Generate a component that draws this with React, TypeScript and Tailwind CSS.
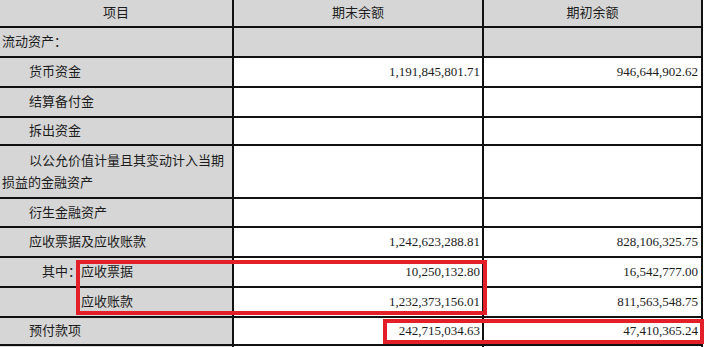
import React from "react";

const GRAY = "bg-[#d6d6d6]";

type Row = {
  h: string;
  label: React.ReactNode;
  labelClass?: string;
  a?: string;
  b?: string;
  grayAll?: boolean;
  header?: boolean;
};

const rows: Row[] = [
  { h: "h-[28px]", label: "项目", header: true, a: "期末余额", b: "期初余额", grayAll: true },
  { h: "h-[30px]", label: "流动资产：", labelClass: "pl-[2px]", grayAll: true },
  { h: "h-[30px]", label: "货币资金", labelClass: "pl-[29px]", a: "1,191,845,801.71", b: "946,644,902.62" },
  { h: "h-[30px]", label: "结算备付金", labelClass: "pl-[29px]" },
  { h: "h-[28px]", label: "拆出资金", labelClass: "pl-[29px]" },
  {
    h: "h-[53px]",
    label: (
      <span className="block leading-[22px] indent-[27px]">
        以公允价值计量且其变动计入当期
        <br />
        损益的金融资产
      </span>
    ),
    labelClass: "pl-[2px]",
  },
  { h: "h-[29px]", label: "衍生金融资产", labelClass: "pl-[29px]" },
  { h: "h-[30px]", label: "应收票据及应收账款", labelClass: "pl-[29px]", a: "1,242,623,288.81", b: "828,106,325.75" },
  { h: "h-[30px]", label: "其中：应收票据", labelClass: "pl-[42px]", a: "10,250,132.80", b: "16,542,777.00" },
  { h: "h-[30px]", label: "应收账款", labelClass: "pl-[81px]", a: "1,232,373,156.01", b: "811,563,548.75" },
  { h: "h-[28px]", label: "预付款项", labelClass: "pl-[29px]", a: "242,715,034.63", b: "47,410,365.24" },
  { h: "h-[30px]", label: "" },
];

export default function App() {
  return (
    <div
      className="relative w-[704px] h-[347px] overflow-hidden bg-white text-[13px] text-[#1c1c1c]"
      style={{ fontFamily: "'Liberation Serif', 'Noto Sans CJK SC', serif" }}
    >
      {rows.map((r, i) => (
        <div key={i} className={`grid grid-cols-[234px_250px_219px] ${r.h}`}>
          <div
            className={`${GRAY} border-r-2 border-b-2 border-[#111] flex items-center ${
              r.header ? "justify-center" : ""
            } ${r.labelClass ?? ""} whitespace-nowrap`}
          >
            {r.label}
          </div>
          <div
            className={`${r.grayAll ? GRAY : "bg-white"} border-r-2 border-b-2 border-[#111] flex items-center ${
              r.header ? "justify-center" : "justify-end pr-[2px]"
            }`}
          >
            {r.a ?? ""}
          </div>
          <div
            className={`${r.grayAll ? GRAY : "bg-white"} border-r-2 border-b-2 border-[#111] flex items-center ${
              r.header ? "justify-center" : "justify-end pr-[3px]"
            }`}
          >
            {r.b ?? ""}
          </div>
        </div>
      ))}
      <div className="absolute left-[76px] top-[260px] w-[411px] h-[55px] border-4 border-[#e3202a]" />
      <div className="absolute left-[383px] top-[319px] w-[321px] h-[25px] border-4 border-[#e3202a]" />
    </div>
  );
}
